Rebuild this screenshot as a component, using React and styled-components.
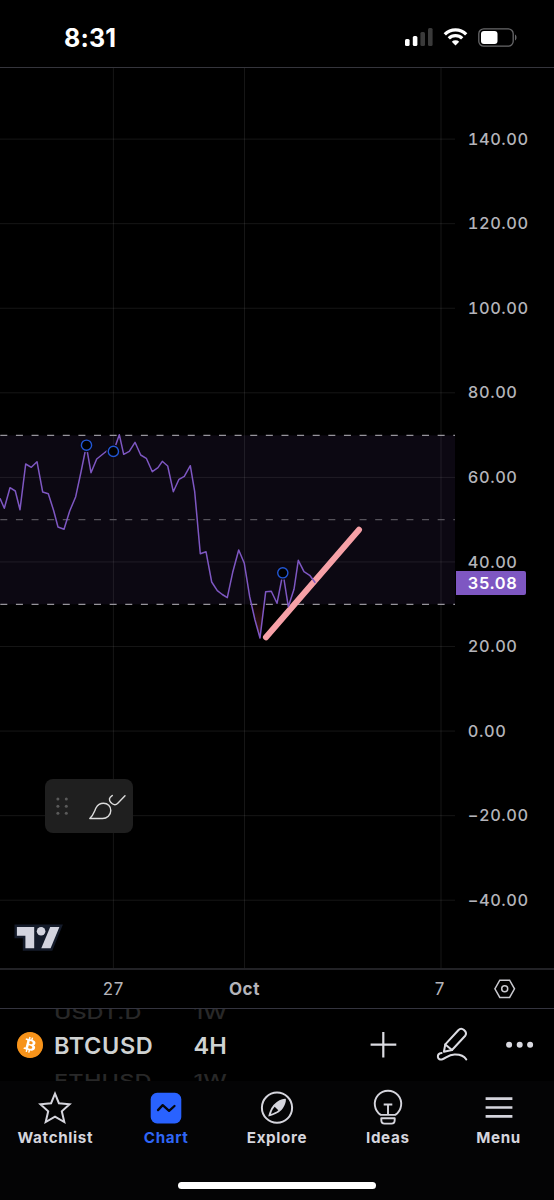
import React from 'react';
import styled, { createGlobalStyle } from 'styled-components';
import { FaBitcoin } from 'react-icons/fa';

const GlobalStyle = createGlobalStyle`
    body {
        margin: 0;
        background: #000;
        font-family: Inter, "Liberation Sans", sans-serif;
    }
`;

const Screen = styled.div`
    width: 554px;
    height: 1200px;
    display: flex;
    flex-direction: column;
    background: #000;
    color: #d5d5dd;
    overflow: hidden;
`;

const StatusBar = styled.header`
    box-sizing: border-box;
    height: 68px;
    padding: 7px 36px 0 64px;
    display: flex;
    align-items: center;
    justify-content: space-between;
    border-bottom: 1px solid #35353c;
`;

const Clock = styled.div`
    padding-top: 1px;
    font-size: 25px;
    font-weight: 700;
    line-height: 30px;
    letter-spacing: 0.15px;
    color: #fff;
`;

const StatusIcons = styled.div`
    display: flex;
    align-items: center;
    gap: 10px;
`;

const ChartArea = styled.main`
    height: 900px;
    display: flex;
`;

const Pane = styled.div`
    position: relative;
    width: 455px;
`;

const PriceAxis = styled.div`
    position: relative;
    box-sizing: border-box;
    width: 99px;
    padding: 28.7px 0 0 12.7px;
`;

const Price = styled.div`
    height: 84.57px;
    line-height: 85px;
    font-size: 16.4px;
    font-weight: 500;
    font-variant-numeric: tabular-nums;
    letter-spacing: 0.6px;
    color: #b4b4ba;
`;

/* last value, lies over the axis labels */
const LastPrice = styled.div`
    position: absolute;
    left: 1px;
    top: 503px;
    width: 69.5px;
    height: 24px;
    box-sizing: border-box;
    padding-left: 11.8px;
    border-radius: 0 2px 2px 0;
    background: #7e57c2;
    color: #fff;
    font-size: 16.4px;
    font-weight: 600;
    line-height: 24px;
    letter-spacing: 0.65px;
`;

const DrawingToolbar = styled.div`
    position: absolute;
    left: 45px;
    top: 711px;
    width: 88px;
    height: 54px;
    border-radius: 8px;
    background: #1f1f1f;
    display: flex;
`;

const Logo = styled.div`
    position: absolute;
    left: 12px;
    top: 852px;
    height: 34px;
`;

const TimeAxis = styled.div`
    display: flex;
    border-top: 2px solid #222226;
    border-bottom: 1px solid #34343f;
    box-sizing: border-box;
    height: 41px;
`;

const TimeCell = styled.div`
    width: ${(p) => p.$width}px;
    display: flex;
    align-items: center;
    justify-content: center;
    font-size: 17px;
    font-weight: ${(p) => (p.$bold ? 700 : 400)};
    letter-spacing: 0.6px;
    color: #b4b4ba;
`;

const SymbolBar = styled.div`
    height: 72px;
    display: flex;
    align-items: center;
    overflow: hidden;
`;

const CoinBadge = styled.div`
    width: 26px;
    height: 26px;
    margin-left: 16.7px;
    border-radius: 50%;
    background: radial-gradient(circle, #fff 60%, #f7931a 62%);
    color: #f7931a;
    font-size: 26px;
    line-height: 0;
`;

const Wheel = styled.div`
    width: ${(p) => p.$width}px;
    margin-left: ${(p) => p.$gap}px;
    height: 72px;
    padding-top: 2px;
    box-sizing: border-box;
    display: flex;
    flex-direction: column;
    align-items: flex-start;
    justify-content: center;
    white-space: nowrap;
`;

const WheelItem = styled.div`
    height: 34px;
    flex: none;
    font-size: 23.5px;
    font-weight: 600;
    line-height: 34px;
    letter-spacing: ${(p) => p.$spacing || 0}px;
    color: #cfd2d2;
`;

/* neighbours on the wheel, turned away and half hidden */
const GhostItem = styled(WheelItem)`
    font-weight: 500;
    color: #282828;
    transform: translateY(1px) scaleY(0.75);
`;

const Actions = styled.div`
    margin-left: auto;
    padding-right: 19px;
    display: flex;
    align-items: center;
`;

const TabBar = styled.nav`
    flex: 1;
    display: grid;
    grid-template-columns: repeat(5, 1fr);
    grid-template-rows: 72px 1fr;
    background: #040405;
`;

const Tab = styled.div`
    padding-top: 8px;
    display: flex;
    flex-direction: column;
    align-items: center;
    font-size: 15.2px;
    font-weight: 700;
    line-height: 20px;
    letter-spacing: 0.65px;
    color: ${(p) => (p.$active ? '#2f66f6' : '#d5d5dd')};

    svg {
        display: block;
        margin-bottom: 3px;
    }
`;

const HomeIndicator = styled.div`
    grid-column: 1 / -1;
    justify-self: center;
    width: 198px;
    height: 7px;
    margin-top: 28.5px;
    border-radius: 4px;
    background: #fff;
`;

const prices = ['140.00', '120.00', '100.00', '80.00', '60.00', '40.00', '20.00', '0.00', '−20.00', '−40.00'];

const rsi = '0,498.3 4.3,508.3 10,487.7 15.3,491 20,509.7 25.7,464 31.3,467.3 37,461.7 42.7,492 48.3,493.7 53.7,510.7 58,527 64,529.3 69.7,511 75.7,496.7 81,472 86.3,446 91,472.7 96.7,459 106.7,451 114,450 119.3,434.7 123.7,454.3 129.3,451.3 135,442.3 140.7,455 146.3,458.3 152.3,471.7 158,467.7 162.3,461.3 167.7,466 173.3,491.7 179,479.3 184.3,476.3 190.3,465.7 194.7,491.7 200.3,553.7 206,551.7 211.7,582 217.3,590.7 222.3,594.5 227.3,597.6 232.7,572.3 238.7,550 244.3,563.3 249.7,596.7 255,620 260,638 265.7,591.7 271.3,591.3 277,603.3 283,573 288.3,606.7 294,589.3 298.3,560.3 304,571.7 309.7,575.3 315.3,582.7';

const anchors = [[86.5, 445.2], [113.4, 451.4], [282.8, 572.8]];
const gridX = [113.4, 244.5, 441];

function RsiChart() {
    return (
        <svg width="455" height="900" viewBox="0 68 455 900">
            <defs>
                <linearGradient id="oversold" x1="0" y1="604" x2="0" y2="640" gradientUnits="userSpaceOnUse">
                    <stop offset="0" stopColor="#ff5252" stopOpacity="0.05" />
                    <stop offset="1" stopColor="#ff5252" stopOpacity="0.3" />
                </linearGradient>
            </defs>
            <rect x="0" y="435.3" width="455" height="169" fill="#0c0812" />
            <g stroke="#fff" strokeOpacity="0.085">
                {prices.map((p, i) => (
                    <line key={p} x1="0" x2="455" y1={139.1 + i * 84.57} y2={139.1 + i * 84.57} />
                ))}
                {gridX.map((x) => (
                    <line key={x} x1={x} x2={x} y1="68" y2="968" />
                ))}
            </g>
            <g strokeDasharray="7 8.62" strokeDashoffset="-0.3" strokeWidth="1.3">
                <line x1="0" x2="455" y1="435.4" y2="435.4" stroke="#96949b" />
                <line x1="0" x2="455" y1="519.6" y2="519.6" stroke="#56535b" />
                <line x1="0" x2="455" y1="604.3" y2="604.3" stroke="#96949b" />
            </g>
            <path d="M251.5 604.3 260 638 264.2 604.3Z" fill="url(#oversold)" />
            <line x1="266" y1="637.3" x2="359" y2="529.7" stroke="#f7a1a7" strokeWidth="6" strokeLinecap="round" />
            <polyline points={rsi} fill="none" stroke="#7e57c2" strokeWidth="1.5" strokeLinejoin="round" />
            {anchors.map(([x, y]) => (
                <g key={x}>
                    <circle cx={x} cy={y} r="7" fill="#0c0812" />
                    <circle cx={x} cy={y} r="5.1" fill="#000" stroke="#2257d6" strokeWidth="1.4" />
                </g>
            ))}
        </svg>
    );
}

function BrushTool() {
    return (
        <svg width="88" height="54" viewBox="45.5 779 88 54">
            <g fill="#5a5a5a">
                {[799, 806.2, 813.3].map((y) => (
                    <React.Fragment key={y}>
                        <circle cx="58.4" cy={y} r="1.5" />
                        <circle cx="66.8" cy={y} r="1.5" />
                    </React.Fragment>
                ))}
            </g>
            <g fill="none" stroke="#dcdcdc" strokeWidth="1.4" strokeLinecap="round" strokeLinejoin="round">
                <path d="M90.3 818.5C94 815 94.8 811.5 96.6 807.8C98.3 804.5 101 803.2 104 803.2C108.3 803.2 111.3 806.5 111.3 810.5C111.3 815 107.5 818.5 103 818.5Z" />
                <path d="M112.8 795.4L110.8 797.3C108.8 799.5 110.5 802 112.8 803.7C114.8 805.2 116.8 804.8 118.3 803.2L125.5 795.7" />
            </g>
        </svg>
    );
}

function ChartLogo() {
    return (
        <svg width="52" height="34" viewBox="12 920 52 34">
            <path d="M17 927H59.2L50.6 948.3H25.3V935.7H17Z" stroke="#141b2a" strokeWidth="5" fill="#141b2a" />
            <g fill="#d3d4df">
                <path d="M16.9 927H34.2V948.3H25.4V935.8H16.9Z" />
                <circle cx="41.1" cy="931.2" r="4.3" />
                <path d="M50.2 927H59.4L50.6 948.3H41.3Z" />
            </g>
        </svg>
    );
}

function StatusGlyphs() {
    return (
        <StatusIcons>
            <svg width="28" height="18" viewBox="0 0 28 18">
                <rect x="0" y="11" width="4.6" height="7" rx="1.5" fill="#fff" />
                <rect x="7.8" y="8" width="4.6" height="10" rx="1.5" fill="#fff" />
                <rect x="15.4" y="4" width="4.6" height="14" rx="1.5" fill="#3a3a3a" />
                <rect x="23" y="0" width="4.6" height="18" rx="1.5" fill="#3a3a3a" />
            </svg>
            <svg width="25" height="18" viewBox="0 0 25 18" fill="none" stroke="#fff" strokeWidth="3.3">
                <path d="M1.8 6.3A15.2 15.2 0 0 1 23.2 6.3" />
                <path d="M5.8 10.4A9.6 9.6 0 0 1 19.2 10.4" />
                <path d="M8.8 13.8A5.4 5.4 0 0 1 16.2 13.8L12.5 17.5Z" fill="#fff" stroke="none" />
            </svg>
            <svg width="40" height="19" viewBox="0 0 40 19">
                <rect x="0.8" y="0.8" width="34.4" height="17.4" rx="5" fill="none" stroke="#68686a" strokeWidth="1.3" />
                <rect x="3" y="3" width="16.5" height="13" rx="3" fill="#fff" />
                <path d="M37 6.5C39 7.5 39 11.5 37 12.5Z" fill="#68686a" />
            </svg>
        </StatusIcons>
    );
}

function HexSettings() {
    return (
        <svg width="24" height="22" viewBox="492.3 978 24 22" fill="none" stroke="#c9c9cf" strokeWidth="1.5">
            <path d="M495.2 988.8L500.1 980.2H509.9L514.8 988.8L509.9 997.4H500.1Z" />
            <circle cx="505" cy="988.8" r="3" />
        </svg>
    );
}

function SymbolActions() {
    return (
        <svg width="170" height="40" viewBox="365 1025 170 40" fill="none" stroke="#dcdce2">
            <path d="M370.6 1044.7H396.3M383.3 1032V1057.5" strokeWidth="2.2" />
            <g strokeWidth="2" strokeLinejoin="round" strokeLinecap="round">
                <path d="M443.9 1051.7L445.3 1044.4L458.3 1030.2C460 1028.4 462.3 1028.5 464 1030C466.2 1031.9 466.5 1034.2 465 1036L452 1050Z" />
                <path d="M445.3 1044.4L452 1050" />
                <path d="M441.6 1053C438.8 1053.3 437.7 1055 437.9 1057C438.2 1059.2 440.2 1060 442.5 1059.3C446 1058.2 448.5 1054.7 454.5 1054.5C460.3 1054.3 464 1055.8 466.3 1059.5" />
            </g>
            <g fill="#d9d9e0" stroke="none">
                <circle cx="509.1" cy="1044.8" r="3" />
                <circle cx="519.7" cy="1044.8" r="3" />
                <circle cx="530.1" cy="1044.8" r="3" />
            </g>
        </svg>
    );
}

const tabs = [
    {
        name: 'Watchlist',
        icon: (
            <path d="M20 4.6L23.9 14.2L34.6 15.2L26.8 22.3L29.3 33L20 27.7L10.7 33L13.2 22.3L5.4 15.2L16.1 14.2Z" fill="none" stroke="#d5d5dd" strokeWidth="2" />
        ),
    },
    {
        name: 'Chart',
        active: true,
        icon: (
            <>
                <rect x="4.7" y="3.8" width="30.6" height="30.6" rx="6.5" fill="#2962ff" />
                <path d="M12 21.1L16.7 16.1L23.1 21.9L28.5 17" fill="none" stroke="#05070f" strokeWidth="2.3" strokeLinecap="round" strokeLinejoin="round" />
            </>
        ),
    },
    {
        name: 'Explore',
        icon: (
            <>
                <circle cx="20" cy="18.7" r="15.1" fill="none" stroke="#d5d5dd" strokeWidth="2" />
                <path fillRule="evenodd" d="M28.8 9.9C29.3 12.8 27.5 17.5 24.5 21C21.5 24 16 26.5 11.3 27.6C12.3 23 14.5 17.5 17.5 15C20.5 12 25 9.5 28.8 9.9ZM17.7 17.8C16 19.5 14.8 22 14 24.9C17 24 19.5 23 21.3 21.3Z" fill="#d5d5dd" />
            </>
        ),
    },
    {
        name: 'Ideas',
        icon: (
            <g fill="none" stroke="#d5d5dd" strokeWidth="1.9" strokeLinejoin="round">
                <path d="M12.7 25.9A13.2 13.2 0 1 1 27.3 25.9Z" />
                <path d="M15.7 15.5H24.3M20 15.5V25.5" />
                <path d="M13.3 29.2H26.7V31C26.7 33.5 25.5 34.6 23.5 34.6H16.5C14.5 34.6 13.3 33.5 13.3 31Z" />
            </g>
        ),
    },
    {
        name: 'Menu',
        icon: (
            <path d="M6.6 9.7H33.4M6.6 18.5H33.4M6.6 27.3H33.4" fill="none" stroke="#d5d5dd" strokeWidth="2.7" />
        ),
    },
];

function App() {
    return (
        <Screen>
            <GlobalStyle />
            <StatusBar>
                <Clock>8:31</Clock>
                <StatusGlyphs />
            </StatusBar>
            <ChartArea>
                <Pane>
                    <RsiChart />
                    <DrawingToolbar><BrushTool /></DrawingToolbar>
                    <Logo><ChartLogo /></Logo>
                </Pane>
                <PriceAxis>
                    {prices.map((p) => <Price key={p}>{p}</Price>)}
                    <LastPrice>35.08</LastPrice>
                </PriceAxis>
            </ChartArea>
            <TimeAxis>
                <TimeCell $width={226.6}>27</TimeCell>
                <TimeCell $width={35.8} $bold>Oct</TimeCell>
                <TimeCell $width={162.6} />
                <TimeCell $width={30}>7</TimeCell>
                <TimeCell $width={99}><HexSettings /></TimeCell>
            </TimeAxis>
            <SymbolBar>
                <CoinBadge><FaBitcoin /></CoinBadge>
                <Wheel $width={127} $gap={11.3}>
                    <GhostItem>USDT.D</GhostItem>
                    <WheelItem $spacing={0.6}>BTCUSD</WheelItem>
                    <GhostItem $spacing={0.2}>ETHUSD</GhostItem>
                </Wheel>
                <Wheel $width={50} $gap={12.5}>
                    <GhostItem>1W</GhostItem>
                    <WheelItem>4H</WheelItem>
                    <GhostItem>1W</GhostItem>
                </Wheel>
                <Actions><SymbolActions /></Actions>
            </SymbolBar>
            <TabBar>
                {tabs.map((tab) => (
                    <Tab key={tab.name} $active={tab.active}>
                        <svg width="40" height="36" viewBox="0 0 40 36">{tab.icon}</svg>
                        {tab.name}
                    </Tab>
                ))}
                <HomeIndicator />
            </TabBar>
        </Screen>
    );
}

export default App;
